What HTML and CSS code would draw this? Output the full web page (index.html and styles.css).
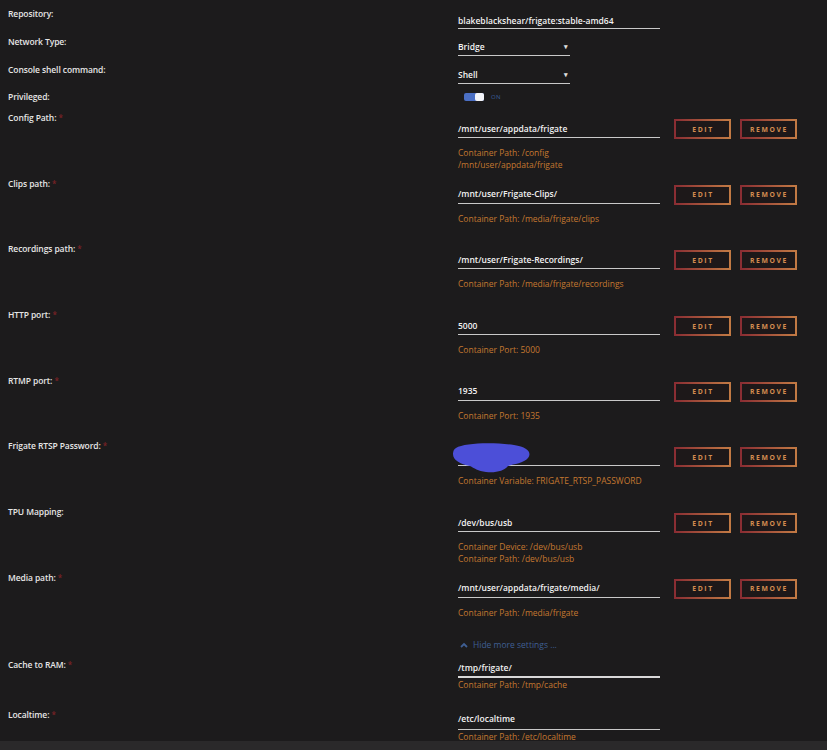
FILE: index.html
```html
<!DOCTYPE html>
<html>
<head>
<meta charset="utf-8">
<link rel="stylesheet" href="styles.css">
</head>
<body>
<div class="form">
  <div class="row r-repo">
    <div class="label">Repository:</div>
    <div class="content"><div class="input wide">blakeblackshear/frigate:stable-amd64</div></div>
  </div>
  <div class="row r-sel">
    <div class="label">Network Type:</div>
    <div class="content"><div class="select">Bridge<span class="caret">▾</span></div></div>
  </div>
  <div class="row r-sel2">
    <div class="label">Console shell command:</div>
    <div class="content"><div class="select">Shell<span class="caret">▾</span></div></div>
  </div>
  <div class="row r-priv">
    <div class="label">Privileged:</div>
    <div class="content"><div class="toggle"><span class="track"><span class="knob"></span></span><span class="on">ON</span></div></div>
  </div>

  <div class="row path">
    <div class="label">Config Path: <span class="req">*</span></div>
    <div class="content">
      <div class="line"><div class="input wide">/mnt/user/appdata/frigate</div><button class="btn">EDIT</button><button class="btn">REMOVE</button></div>
      <div class="note">Container Path: /config<br>/mnt/user/appdata/frigate</div>
    </div>
  </div>
  <div class="row path">
    <div class="label">Clips path: <span class="req">*</span></div>
    <div class="content">
      <div class="line"><div class="input wide">/mnt/user/Frigate-Clips/</div><button class="btn">EDIT</button><button class="btn">REMOVE</button></div>
      <div class="note">Container Path: /media/frigate/clips</div>
    </div>
  </div>
  <div class="row path">
    <div class="label">Recordings path: <span class="req">*</span></div>
    <div class="content">
      <div class="line"><div class="input wide">/mnt/user/Frigate-Recordings/</div><button class="btn">EDIT</button><button class="btn">REMOVE</button></div>
      <div class="note">Container Path: /media/frigate/recordings</div>
    </div>
  </div>
  <div class="row path">
    <div class="label">HTTP port: <span class="req">*</span></div>
    <div class="content">
      <div class="line"><div class="input wide">5000</div><button class="btn">EDIT</button><button class="btn">REMOVE</button></div>
      <div class="note">Container Port: 5000</div>
    </div>
  </div>
  <div class="row path">
    <div class="label">RTMP port: <span class="req">*</span></div>
    <div class="content">
      <div class="line"><div class="input wide">1935</div><button class="btn">EDIT</button><button class="btn">REMOVE</button></div>
      <div class="note">Container Port: 1935</div>
    </div>
  </div>
  <div class="row path">
    <div class="label">Frigate RTSP Password: <span class="req">*</span></div>
    <div class="content">
      <div class="line"><div class="input wide masked">
        <svg class="blob" width="80" height="31" viewBox="0 0 80 31"><path d="M4 5 C12 0 40 -1 62 2 C76 4 80 10 76 15 C72 20 62 21 56 23 C52 28 44 30 34 29 C26 28 22 25 18 23 C8 21 1 17 1 11 C1 8 2 6 4 5 Z" fill="#4c4fd8"/></svg>
      </div><button class="btn">EDIT</button><button class="btn">REMOVE</button></div>
      <div class="note">Container Variable: FRIGATE_RTSP_PASSWORD</div>
    </div>
  </div>
  <div class="row path">
    <div class="label">TPU Mapping:</div>
    <div class="content">
      <div class="line"><div class="input wide">/dev/bus/usb</div><button class="btn">EDIT</button><button class="btn">REMOVE</button></div>
      <div class="note">Container Device: /dev/bus/usb<br>Container Path: /dev/bus/usb</div>
    </div>
  </div>
  <div class="row path">
    <div class="label">Media path: <span class="req">*</span></div>
    <div class="content">
      <div class="line"><div class="input wide">/mnt/user/appdata/frigate/media/</div><button class="btn">EDIT</button><button class="btn">REMOVE</button></div>
      <div class="note">Container Path: /media/frigate</div>
    </div>
  </div>

  <div class="row r-hide">
    <div class="label"></div>
    <div class="content"><div class="hide"><svg width="8" height="6" viewBox="0 0 8 6"><path d="M1 5 L4 2 L7 5" fill="none" stroke="#3f5f93" stroke-width="1.8"/></svg>Hide more settings ...</div></div>
  </div>

  <div class="row r-cache">
    <div class="label">Cache to RAM: <span class="req">*</span></div>
    <div class="content">
      <div class="input wide focus">/tmp/frigate/</div>
      <div class="note tight">Container Path: /tmp/cache</div>
    </div>
  </div>
  <div class="row r-local">
    <div class="label">Localtime: <span class="req">*</span></div>
    <div class="content">
      <div class="input wide lt">/etc/localtime</div>
      <div class="note tight2">Container Path: /etc/localtime</div>
    </div>
  </div>
</div>
<div class="footer"></div>
</body>
</html>
```
FILE: styles.css
```css
html, body {
  margin: 0;
  padding: 0;
  background: #1c1b1c;
  height: 750px;
  overflow: hidden;
}
body {
  font-family: "Open Sans", "Noto Sans", sans-serif;
  font-size: 9px;
  color: #e8e8e8;
}
.form {
  padding-top: 8px;
  height: 733px;
}
.row {
  display: grid;
  grid-template-columns: 450px 1fr;
  padding-left: 8px;
}
.label {
  font-weight: 600;
  line-height: 12px;
  color: #e6e6e6;
  font-size: 8.5px;
  letter-spacing: -0.1px;
}
.req {
  color: #7a2226;
  font-size: 8px;
}
.content {
  display: flex;
  flex-direction: column;
  align-items: flex-start;
}
.input {
  box-sizing: border-box;
  border-bottom: 1px solid #c9c9c9;
  font-weight: 600;
  font-size: 8.5px;
  color: #f2f2f2;
  display: flex;
  align-items: center;
}
.wide { width: 202px; }
.r-repo { height: 28px; }
.r-repo .input { margin-top: 4px; height: 17px; }
.r-sel { height: 28px; }
.r-sel2 { height: 27px; }
.select {
  box-sizing: border-box;
  width: 112px;
  height: 19px;
  margin-top: 1px;
  border-bottom: 1px solid #c9c9c9;
  font-weight: 600;
  font-size: 8.5px;
  color: #f2f2f2;
  display: flex;
  align-items: center;
  justify-content: space-between;
  padding-top: 1px;
}
.caret {
  font-size: 7px;
  margin-right: 2px;
  color: #e0e0e0;
}
.r-priv { height: 21px; }
.toggle {
  display: flex;
  align-items: center;
  margin-top: 2px;
  margin-left: 6px;
}
.track {
  width: 20px;
  height: 8px;
  border-radius: 2px;
  background: #4b6fc4;
  display: flex;
  justify-content: flex-end;
}
.knob {
  width: 9px;
  height: 8px;
  border-radius: 2px;
  background: #f4f4f8;
}
.on {
  color: #3a5b98;
  font-size: 6px;
  margin-left: 7px;
  letter-spacing: 0.3px;
}
.path { height: 65.7px; }
.line {
  display: flex;
  align-items: flex-start;
  margin-top: 7px;
}
.line .input { height: 19px; }
.btn {
  box-sizing: border-box;
  width: 57px;
  height: 20px;
  margin-left: 14px;
  padding: 0;
  background: #1d1819;
  border: 2px solid transparent;
  border-image: linear-gradient(90deg, #8a2d33, #c27a44) 1;
  color: #d38c50;
  font-family: "Open Sans", "Noto Sans", sans-serif;
  font-weight: 700;
  font-size: 6.8px;
  letter-spacing: 1.6px;
  padding-left: 1px;
}
.btn + .btn { margin-left: 9px; }
.note {
  margin-top: 8px;
  line-height: 12px;
  color: #c47830;
  font-size: 8.5px;
}
.masked { position: relative; }
.blob {
  position: absolute;
  left: -6px;
  top: -4px;
}
.r-hide { height: 21.4px; }
.hide {
  display: flex;
  align-items: center;
  gap: 5px;
  margin-left: 2px;
  padding-top: 1px;
  line-height: 12px;
  color: #3f5f93;
  font-size: 8.5px;
}
.r-cache { height: 50px; }
.focus {
  height: 19px;
  border-bottom: 2px solid #d8d8d8;
}
.note.tight { margin-top: 1px; }
.r-local { height: 32px; }
.lt { height: 21px; }
.note.tight2 { margin-top: 1px; }
.footer {
  height: 17px;
  background: #2a292a;
}
```
